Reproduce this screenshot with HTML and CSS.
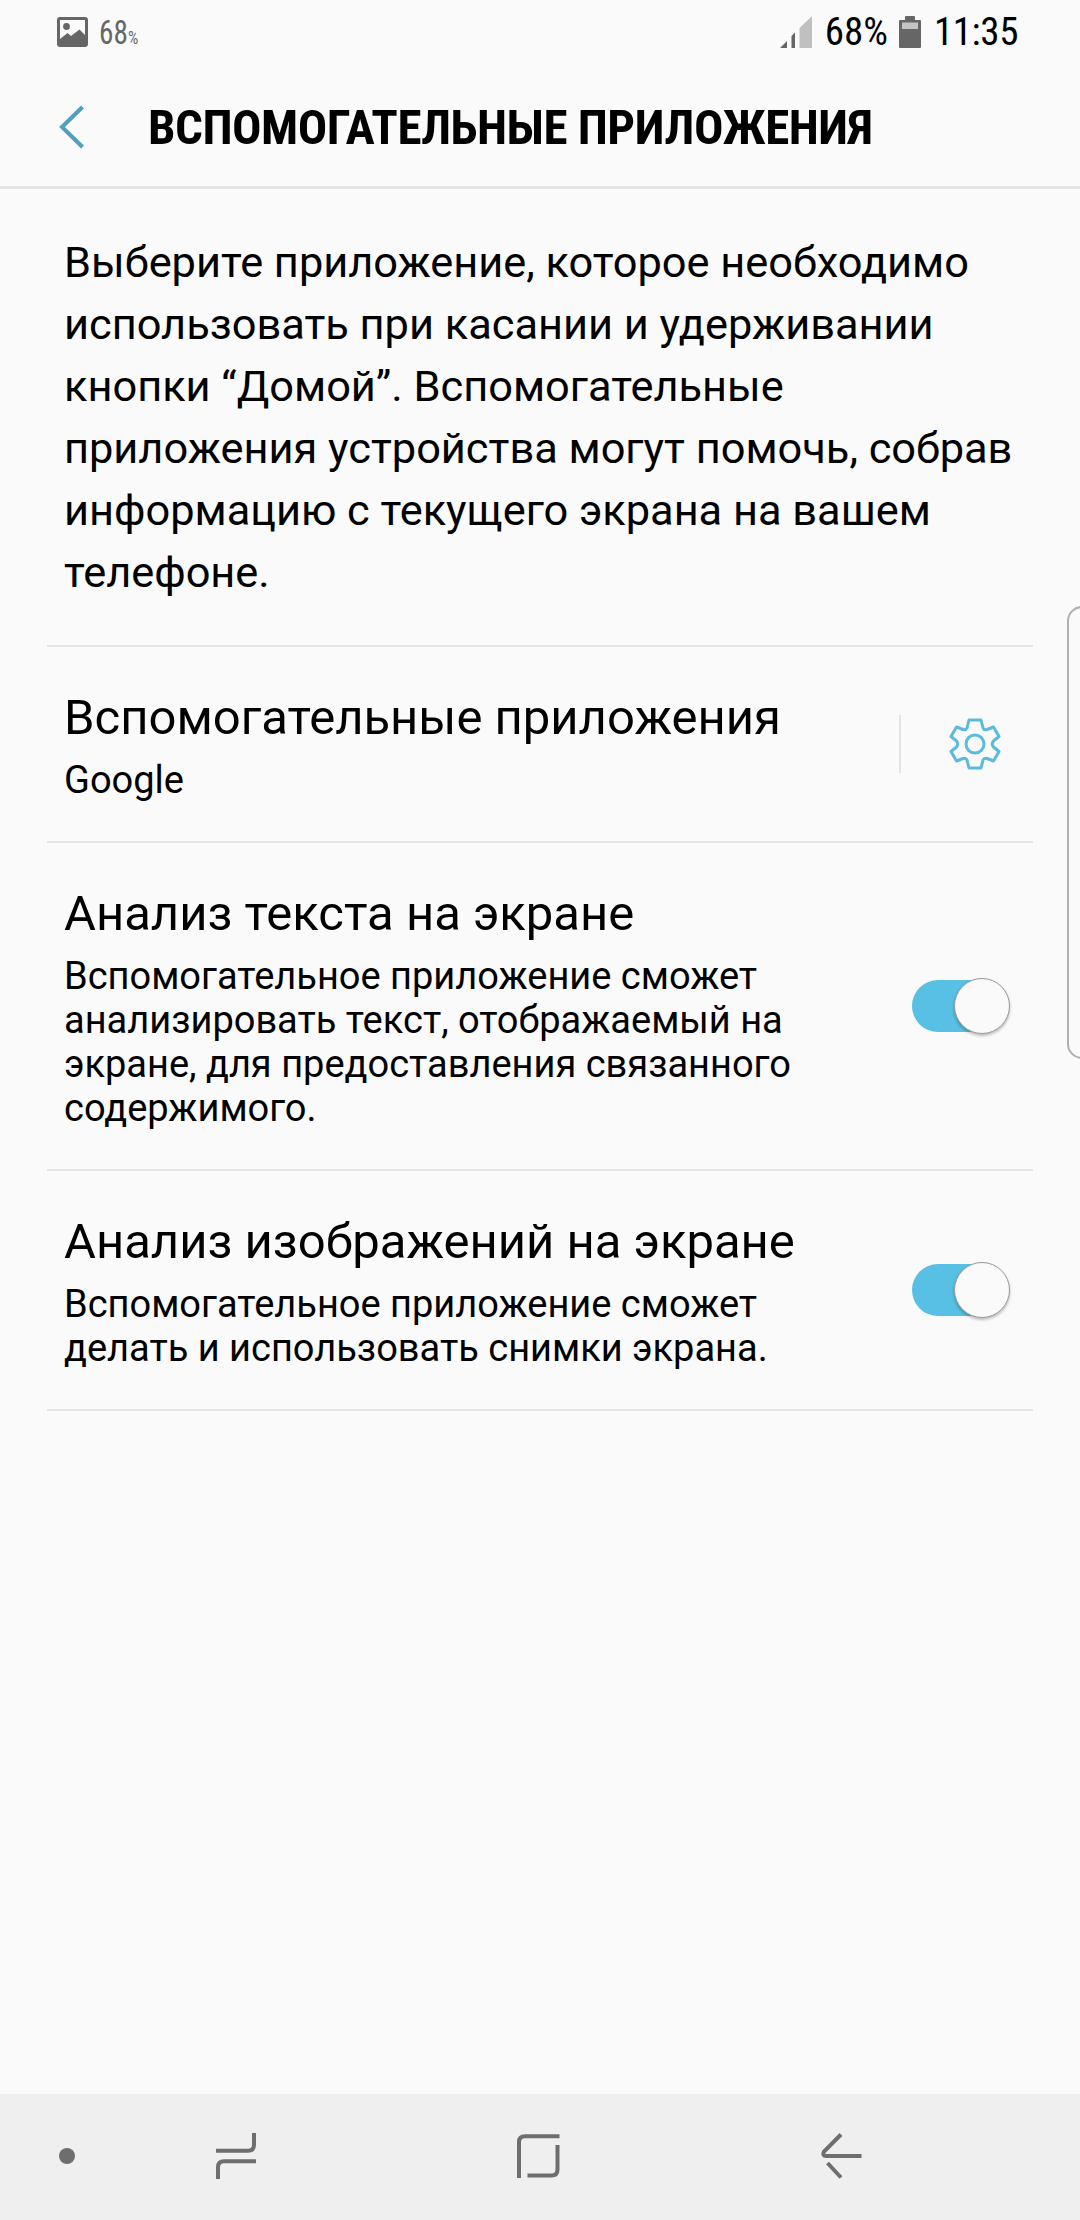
FILE: index.html
```html
<!DOCTYPE html>
<html lang="ru">
<head>
<meta charset="utf-8">
<title>Вспомогательные приложения</title>
<link rel="stylesheet" href="styles.css">
</head>
<body>
<div class="screen">
  <div class="status">
    <div class="status-left">
      <svg width="31" height="30" viewBox="0 0 31 30"><path fill="#666" fill-rule="evenodd" d="M3 0H28Q31 0 31 3V27Q31 30 28 30H3Q0 30 0 27V3Q0 0 3 0ZM3 3V22L10.500 16L14 19L22.500 12.500L28 18V3Z"/><circle cx="9.500" cy="9.500" r="3.400" fill="#666"/></svg>
      <span class="note">68<small>%</small></span>
    </div>
    <div class="status-right">
      <svg class="signal" width="32" height="33" viewBox="0 0 32 33"><path fill="#666" d="M0 32L7 25V32ZM11.500 20L15 16.500V32H11.500Z"/><path fill="#c0c0c0" d="M19.500 12L32 0V32H19.500Z"/></svg>
      <span class="level">68%</span>
      <svg class="battery" width="22" height="33" viewBox="0 0 22 33"><path fill="#666" d="M6 4V1Q6 0 7 0H15Q16 0 16 1V4H21Q22 4 22 5V31Q22 32 21 32H1Q0 32 0 31V5Q0 4 1 4Z"/><path fill="#c4c4c4" d="M3 6.500H19V13H3Z"/></svg>
      <span class="clock">11:35</span>
    </div>
  </div>
  <header class="appbar">
    <svg class="back" width="26" height="44" viewBox="0 0 26 44"><path d="M23.500 2L3 22L23.500 42" fill="none" stroke="#4f9fbd" stroke-width="4"/></svg>
    <h1>ВСПОМОГАТЕЛЬНЫЕ ПРИЛОЖЕНИЯ</h1>
  </header>
  <main>
    <p class="intro">Выберите приложение, которое необходимо<br>использовать при касании и удерживании<br>кнопки “Домой”. Вспомогательные<br>приложения устройства могут помочь, собрав<br>информацию с текущего экрана на вашем<br>телефоне.</p>
    <section class="row row-app">
      <div class="label"><h2>Вспомогательные приложения</h2><p>Google</p></div>
      <div class="gear">
        <svg width="52" height="54" viewBox="-26 -27 52 54" fill="none" stroke="#5bbbdc" stroke-width="3" stroke-linejoin="round"><circle r="9"/><path d="M-6 -24H6L8 -16Q9 -13.500 12 -14.500L18.500 -17L24 -7.500L18.500 -3Q16 0 18.500 3L24 7.500L18.500 17L12 14.500Q9 13.500 8 16L6 24H-6L-8 16Q-9 13.500 -12 14.500L-18.500 17L-24 7.500L-18.500 3Q-16 0 -18.500 -3L-24 -7.500L-18.500 -17L-12 -14.500Q-9 -13.500 -8 -16Z"/></svg>
      </div>
    </section>
    <section class="row row-text">
      <div class="label"><h2>Анализ текста на экране</h2><p>Вспомогательное приложение сможет<br>анализировать текст, отображаемый на<br>экране, для предоставления связанного<br>содержимого.</p></div>
      <div class="switch"><div class="knob"></div></div>
    </section>
    <section class="row row-image">
      <div class="label"><h2>Анализ изображений на экране</h2><p>Вспомогательное приложение сможет<br>делать и использовать снимки экрана.</p></div>
      <div class="switch"><div class="knob"></div></div>
    </section>
  </main>
  <nav class="navbar">
    <svg width="16" height="16" viewBox="0 0 16 16"><circle cx="8" cy="8" r="8" fill="#6e6e6e"/></svg>
    <svg width="40" height="46" viewBox="0 0 40 46"><path d="M0 17.700H32Q38 17.700 38 11.700V0M40 28.300H8Q2 28.300 2 34.300V46"/></svg>
    <svg width="43" height="44" viewBox="0 0 43 44"><path d="M2 44V8Q2 2.200 8 2.200H42.500M40.500 11V35.500Q40.500 41.500 34.500 41.500H10.500"/></svg>
    <svg width="41" height="46" viewBox="0 0 41 46"><path d="M20 1.500L3 18.700Q1 23 5 23H40.500M6.500 30L20 44.500"/></svg>
  </nav>
  <div class="edge-panel"></div>
</div>
</body>
</html>
```
FILE: styles.css
```css
* { box-sizing: border-box; margin: 0; padding: 0; }
body { background: #fafafa; color: #000; font-family: Roboto, "Noto Sans", sans-serif; }
svg { display: block; flex: none; }
.screen { position: relative; width: 1080px; height: 2220px; display: flex; flex-direction: column; overflow: hidden; }
.status { height: 66px; display: flex; justify-content: space-between; padding: 0 62px 0 57px; font-family: "Roboto Condensed", Roboto, sans-serif; font-stretch: condensed; }
.status-left, .status-right { display: flex; align-items: center; height: 64px; white-space: nowrap; }
.note { margin-left: 11px; font-size: 34px; color: #666; transform: scaleX(.86); transform-origin: left; }
.note small { font-size: 19px; }
.level { margin-left: 13px; font-size: 39px; }
.battery { margin-left: 11px; }
.clock { margin-left: 13px; font-size: 39px; letter-spacing: -.4px; }
.appbar { height: 123px; border-bottom: 3px solid #e6e6e6; display: flex; align-items: center; padding: 2px 0 0 59px; }
.appbar h1 { margin-left: 63px; font: 700 49px "Roboto Condensed", Roboto, sans-serif; font-stretch: condensed; letter-spacing: -.5px; white-space: nowrap; }
main { flex: 1; padding: 0 47px; }
.intro { height: 458px; padding: 43px 17px 0; border-bottom: 2px solid #e4e4e4; font-size: 43.350px; line-height: 62px; white-space: nowrap; }
.row { display: flex; justify-content: space-between; align-items: center; padding: 0 23px 0 17px; border-bottom: 2px solid #e4e4e4; white-space: nowrap; }
.row-app { height: 196px; }
.row-text { height: 328px; }
.row-image { height: 240px; }
.label { padding-top: 3px; }
.row h2 { font-weight: 400; font-size: 49px; line-height: 58px; }
.row p { font-size: 38px; line-height: 44px; margin-top: 11px; }
.gear { height: 58px; border-left: 2px solid #e4e4e4; padding: 2px 9px 0 48px; }
.switch { width: 98px; height: 52px; border-radius: 26px; background: linear-gradient(90deg, #57c0e4 70px, transparent 70px); display: flex; justify-content: flex-end; align-items: center; }
.knob { width: 56px; height: 56px; flex: none; border-radius: 50%; border: 1px solid #999; background: #fafafa; box-shadow: 0 2px 3px rgba(0,0,0,.25); }
.navbar { height: 126px; background: #efefef; display: flex; align-items: center; padding: 0 0 2px 59px; }
.navbar svg { fill: none; stroke: #6e6e6e; stroke-width: 4; }
.navbar svg:first-child { stroke: none; }
.navbar svg:nth-child(2) { margin-left: 141px; }
.navbar svg:nth-child(3) { margin-left: 261px; }
.navbar svg:nth-child(4) { margin-left: 261px; }
.edge-panel { position: absolute; left: 1067px; top: 606px; width: 30px; height: 453px; border: 2px solid #b0b0b0; border-radius: 16px; }
```
